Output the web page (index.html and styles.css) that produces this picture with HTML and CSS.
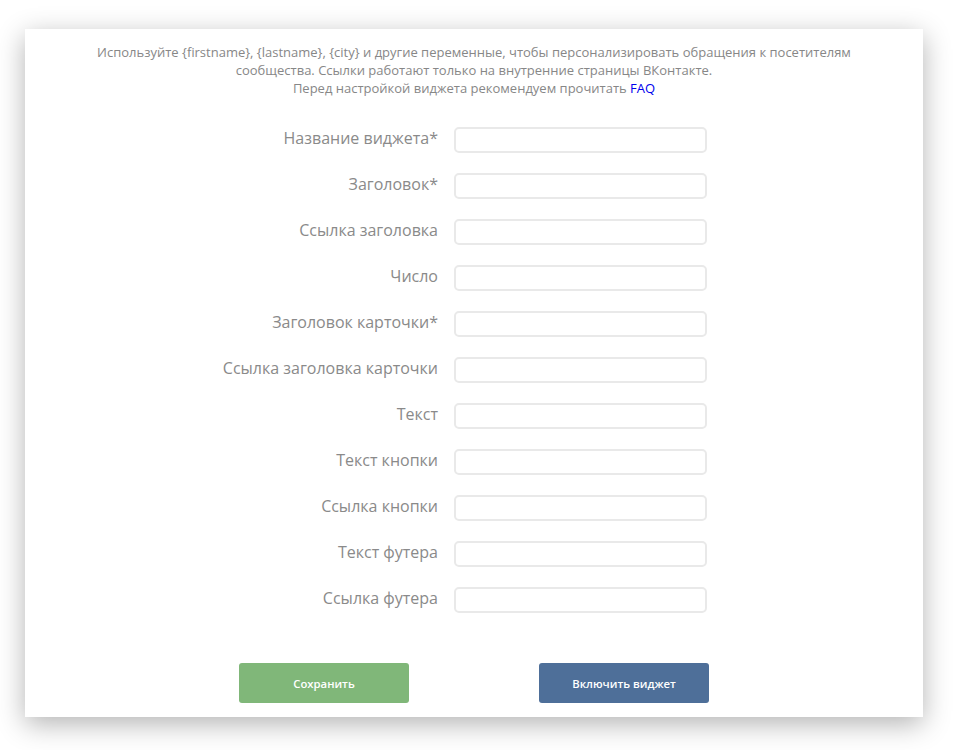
FILE: index.html
```html
<!DOCTYPE html>
<html lang="ru">
<head>
<meta charset="utf-8">
<link rel="stylesheet" href="styles.css">
</head>
<body>
<div class="card">
  <div class="intro">
    <p>Используйте {firstname}, {lastname}, {city} и другие переменные, чтобы персонализировать обращения к посетителям<br>сообщества. Ссылки работают только на внутренние страницы ВКонтакте.<br>Перед настройкой виджета рекомендуем прочитать <a href="#" class="faq">FAQ</a></p>
  </div>
  <form class="form">
    <label class="lbl">Название виджета*</label><input class="inp" type="text">
    <label class="lbl">Заголовок*</label><input class="inp" type="text">
    <label class="lbl">Ссылка заголовка</label><input class="inp" type="text">
    <label class="lbl">Число</label><input class="inp" type="text">
    <label class="lbl">Заголовок карточки*</label><input class="inp" type="text">
    <label class="lbl">Ссылка заголовка карточки</label><input class="inp" type="text">
    <label class="lbl">Текст</label><input class="inp" type="text">
    <label class="lbl">Текст кнопки</label><input class="inp" type="text">
    <label class="lbl">Ссылка кнопки</label><input class="inp" type="text">
    <label class="lbl">Текст футера</label><input class="inp" type="text">
    <label class="lbl">Ссылка футера</label><input class="inp" type="text">
  </form>
  <div class="actions">
    <button class="btn btn-save" type="button">Сохранить</button>
    <button class="btn btn-enable" type="button">Включить виджет</button>
  </div>
</div>
</body>
</html>
```

FILE: styles.css
```css
html, body {
  margin: 0;
  padding: 0;
  background: #ffffff;
}
html {
  width: 960px;
  height: 750px;
  overflow: hidden;
}
body {
  font-family: "Open Sans", "Noto Sans", sans-serif;
  padding: 29px 37px 33px 25px;
  width: 960px;
  height: 750px;
  box-sizing: border-box;
}
.card {
  width: 898px;
  height: 688px;
  box-sizing: border-box;
  background: #fff;
  box-shadow: 0 7px 26px rgba(0, 0, 0, 0.3);
  padding-top: 14px;
}
.intro p {
  margin: 0;
  text-align: center;
  font-size: 13px;
  line-height: 18px;
  color: #878787;
}
.faq {
  color: #0000ee;
  text-decoration: none;
}
.form {
  margin-top: 30px;
  display: grid;
  grid-template-columns: 413px 253px;
  column-gap: 16px;
  row-gap: 20px;
  align-items: center;
}
.lbl {
  text-align: right;
  font-size: 16px;
  color: #8a8a8a;
  line-height: 20px;
  padding-bottom: 5px;
}
.inp {
  height: 26px;
  box-sizing: border-box;
  border: 2px solid #e9e9e9;
  border-radius: 5px;
  background: #fff;
  margin: 0;
  padding: 0 6px;
  outline: none;
}
.actions {
  margin-top: 50px;
  display: flex;
  gap: 130px;
  padding-left: 214px;
}
.btn {
  width: 170px;
  height: 40px;
  border: none;
  border-radius: 3px;
  color: #fff;
  font-family: "Open Sans", "Noto Sans", sans-serif;
  font-weight: 600;
  font-size: 11.3px;
  padding: 0;
}
.btn-save {
  background: #80b779;
}
.btn-enable {
  background: #4e6f99;
}
```
